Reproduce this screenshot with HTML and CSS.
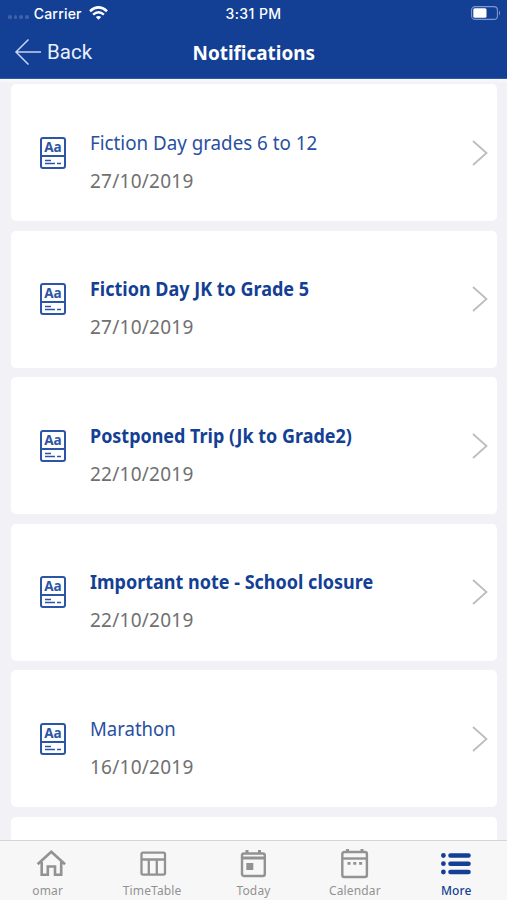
FILE: index.html
```html
<!DOCTYPE html>
<html lang="en">
<head>
<meta charset="utf-8">
<title>Notifications</title>
<link rel="stylesheet" href="styles.css">
</head>
<body>
<div class="app">
  <header class="header">
    <div class="status">
      <div class="carrier"><span class="dots"><i></i><i></i><i></i><i></i></span><span class="op">Carrier</span>
        <svg width="19" height="14" viewBox="0 0 19 14"><g fill="none" stroke="#fff" stroke-width="2.500"><path d="M1 5.200Q9.500-2.400 18 5.200"/><path d="M4.100 8.600Q9.500 3.800 14.900 8.600"/></g><path d="M6.800 11Q9.500 8.800 12.200 11L9.500 13.800Z" fill="#fff"/></svg>
      </div>
      <div class="clock">3:31 PM</div>
      <div class="batt"><svg width="30" height="14" viewBox="0 0 30 14"><rect x=".6" y=".6" width="25.800" height="12.800" rx="3.500" fill="none" stroke="#7f97cc" stroke-width="1.100"/><rect x="2.300" y="2.300" width="13.200" height="9.400" rx="1.500" fill="#fff"/><path d="M28 4.500q2.200 2.500 0 5z" fill="#7f97cc"/></svg></div>
    </div>
    <div class="nav">
      <div class="back"><svg width="28" height="28" viewBox="0 0 28 28"><path d="M14.500 1.500L2 14L14.500 26.500M2 14H27" fill="none" stroke="#c5d4f3" stroke-width="1.500"/></svg><span>Back</span></div>
      <h1>Notifications</h1>
      <div></div>
    </div>
  </header>
  <main class="list">
    <article class="card">
      <div class="note"><span>Aa</span><svg viewBox="0 0 22 10"><path d="M3 3.500h6M3 6.500h10M15 6.500h4"/></svg></div>
      <div class="body"><h2 class="t1">Fiction Day grades 6 to 12</h2><p>27/10/2019</p></div>
      <svg class="chev" viewBox="0 0 18 28"><path d="M2 2L15.500 14L2 26"/></svg>
    </article>
    <article class="card unread">
      <div class="note"><span>Aa</span><svg viewBox="0 0 22 10"><path d="M3 3.500h6M3 6.500h10M15 6.500h4"/></svg></div>
      <div class="body"><h2 class="t2">Fiction Day JK to Grade 5</h2><p>27/10/2019</p></div>
      <svg class="chev" viewBox="0 0 18 28"><path d="M2 2L15.500 14L2 26"/></svg>
    </article>
    <article class="card unread">
      <div class="note"><span>Aa</span><svg viewBox="0 0 22 10"><path d="M3 3.500h6M3 6.500h10M15 6.500h4"/></svg></div>
      <div class="body"><h2 class="t3">Postponed Trip (Jk to Grade2)</h2><p>22/10/2019</p></div>
      <svg class="chev" viewBox="0 0 18 28"><path d="M2 2L15.500 14L2 26"/></svg>
    </article>
    <article class="card unread">
      <div class="note"><span>Aa</span><svg viewBox="0 0 22 10"><path d="M3 3.500h6M3 6.500h10M15 6.500h4"/></svg></div>
      <div class="body"><h2 class="t4">Important note - School closure</h2><p>22/10/2019</p></div>
      <svg class="chev" viewBox="0 0 18 28"><path d="M2 2L15.500 14L2 26"/></svg>
    </article>
    <article class="card">
      <div class="note"><span>Aa</span><svg viewBox="0 0 22 10"><path d="M3 3.500h6M3 6.500h10M15 6.500h4"/></svg></div>
      <div class="body"><h2 class="t5">Marathon</h2><p>16/10/2019</p></div>
      <svg class="chev" viewBox="0 0 18 28"><path d="M2 2L15.500 14L2 26"/></svg>
    </article>
    <article class="card"></article>
  </main>
  <nav class="tabs">
    <a class="tab home"><svg viewBox="0 0 32 32"><path d="M2.600 16.300L16.300 3.800L30 16.300M6.700 14V26.700H12.800V18.500H20V26.700H26.200V14" fill="none" stroke="currentColor" stroke-width="2.600"/></svg><span>omar</span></a>
    <a class="tab"><svg viewBox="0 0 32 32"><g fill="none" stroke="currentColor" stroke-width="2.300"><rect x="5.500" y="4.600" width="23.500" height="22" rx="1.500"/><path d="M5.500 11.500H29M12.800 11.500V27M20.800 11.500V27"/></g></svg><span>TimeTable</span></a>
    <a class="tab"><svg viewBox="0 0 32 32"><path d="M10 2V6M22.500 2V6" stroke="currentColor" stroke-width="3"/><rect x="5" y="5.500" width="22.800" height="22.500" rx="2" fill="none" stroke="currentColor" stroke-width="2.400"/><path d="M5 10H27.500" stroke="currentColor" stroke-width="3"/><rect x="9.300" y="15" width="7" height="7" fill="currentColor"/></svg><span>Today</span></a>
    <a class="tab"><svg viewBox="0 0 32 32"><path d="M8.500 1V5M23 1V5" stroke="currentColor" stroke-width="3"/><rect x="3.300" y="4" width="24.600" height="25" rx="2" fill="none" stroke="currentColor" stroke-width="2.400"/><path d="M4 10.500H28" stroke="currentColor" stroke-width="2.400"/><path d="M8.500 15.300h3M14.300 15.300h3M20.100 15.300h3" stroke="currentColor" stroke-width="2.800"/></svg><span>Calendar</span></a>
    <a class="tab active"><svg viewBox="0 0 32 32"><path d="M10.500 7.500H28.500M10.500 15.700H28.500M10.500 24H28.500" stroke="currentColor" stroke-width="4.600" stroke-linecap="round"/><g fill="currentColor"><circle cx="3.400" cy="7.500" r="2.400"/><circle cx="3.400" cy="15.700" r="2.400"/><circle cx="3.400" cy="24" r="2.400"/></g></svg><span>More</span></a>
  </nav>
</div>
</body>
</html>
```
FILE: styles.css
```css
* { box-sizing: border-box; }
body { margin: 0; font-family: "Noto Sans", sans-serif; }
.app { width: 507px; height: 900px; display: flex; flex-direction: column; background: #f1f1f6; overflow: hidden; }
.header { flex: none; height: 79px; background: #133f95; color: #fff; border-bottom: 1px solid #3059a9; }
.status { height: 26px; display: grid; grid-template-columns: 1fr auto 1fr; align-items: center; font: 500 14px Inter, sans-serif; }
.carrier { display: flex; align-items: center; padding-left: 8px; }
.dots { display: flex; gap: 2px; margin: 8px 5px 0 0; }
.dots i { width: 3.700px; height: 3.700px; border-radius: 50%; background: #3e62aa; }
.op { margin-right: 7px; letter-spacing: .2px; }
.clock { letter-spacing: .4px; }
.batt { display: flex; justify-content: flex-end; padding-right: 6px; }
.nav { height: 52px; display: grid; grid-template-columns: 1fr auto 1fr; align-items: center; }
.back { display: flex; align-items: center; padding-left: 14px; gap: 5px; font: 400 20.500px Roboto, sans-serif; color: #e9effb; }
h1 { margin: 2px 0 0; font-size: 20px; line-height: 28px; font-weight: 700; transform: scaleX(.945); }
.list { flex: 1; min-height: 0; overflow: hidden; display: flex; flex-direction: column; gap: 9.600px; padding: 5px 10px 0 11px; background: linear-gradient(#fafafc, #f1f1f6 5px); }
.card { flex: none; height: 137px; background: #fff; border-radius: 5px; display: flex; align-items: center; padding: 0 8px 0 29px; }
.note { width: 26px; height: 32px; border: 2px solid; border-radius: 3px; color: #2d55a5; margin: 0 24px 0 0; flex: none; display: flex; flex-direction: column; }
.note span { height: 18px; border-bottom: 2px solid; font-size: 13.500px; line-height: 17px; font-weight: 700; text-align: center; }
.note svg { width: 22px; height: 10px; fill: none; stroke: currentColor; stroke-width: 1.700; }
.body { flex: 1; padding-top: 18px; }
h2 { margin: 0; width: max-content; font-size: 20px; line-height: 28px; font-weight: 400; color: #294fa2; white-space: nowrap; transform-origin: left; }
.unread h2 { font-weight: 700; color: #133f95; }
.t1 { transform: scaleX(.938); }
.t2 { transform: scaleX(.899); }
.t3 { transform: scaleX(.897); }
.t4 { transform: scaleX(.9); }
.t5 { transform: scaleX(.927); }
p { margin: 10px 0 0; font-size: 19px; letter-spacing: .25px; line-height: 28px; color: #707070; }
.chev { width: 18px; height: 28px; fill: none; stroke: #bdbdbd; stroke-width: 1.800; flex: none; }
.tabs { flex: none; height: 60px; background: #f7f7f7; border-top: 1px solid #d6d6d8; display: grid; grid-template-columns: repeat(5, 1fr); }
.tab { display: flex; flex-direction: column; align-items: center; padding-top: 7px; color: #929292; font-size: 12px; line-height: 18px; }
.tab svg { width: 32px; height: 32px; margin-bottom: 2px; }
.tab span { letter-spacing: .15px; }
.home span { margin-right: 6px; }
.active { color: #133f95; font-weight: 500; }
```
